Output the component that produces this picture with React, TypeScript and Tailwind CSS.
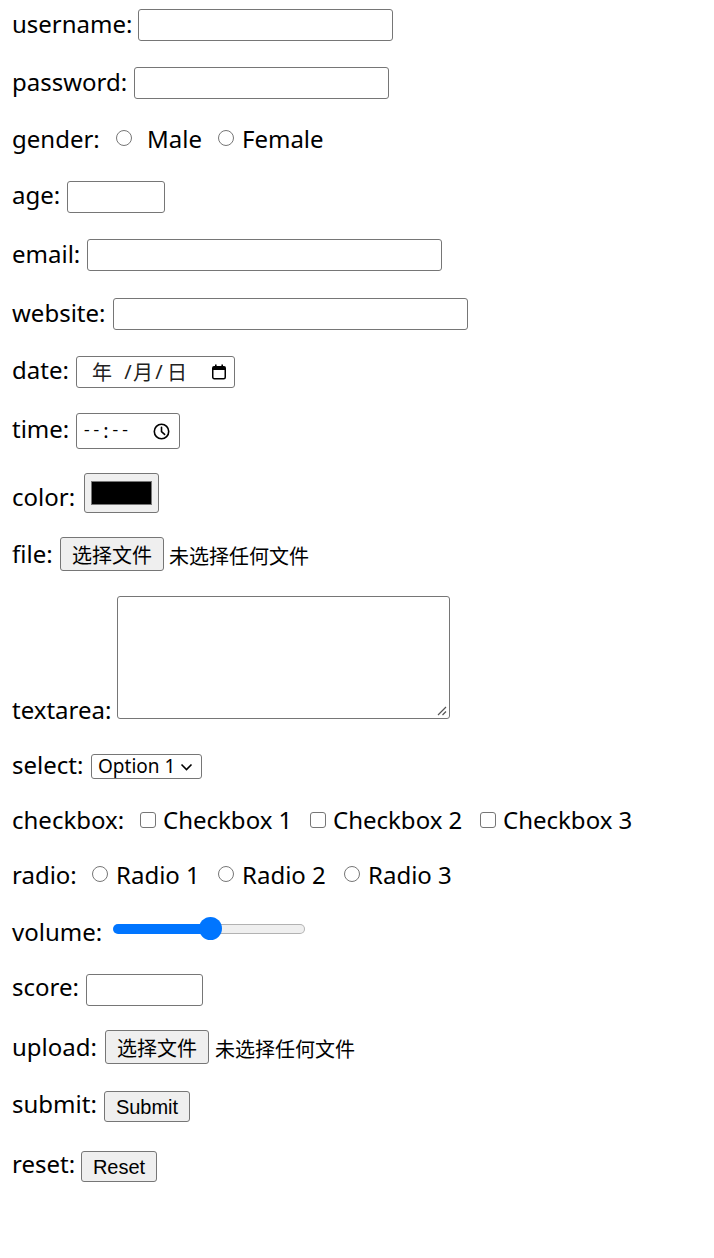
import React from "react";

const inputBox = "shrink-0 h-[32px] border border-[#767676] rounded-[3px] bg-white";
const btn =
  "shrink-0 flex items-center justify-center border border-[#767676] rounded-[3px] bg-[#efefef] text-black";
const lab = "shrink-0 leading-[34px] -mb-[2px] whitespace-nowrap";
const cjk = "font-['Noto_Sans_CJK_SC',sans-serif]";
const arial = "font-['Liberation_Sans',Arial,sans-serif]";

function Radio({ cls }: { cls: string }) {
  return <span className={`shrink-0 w-[16px] h-[16px] rounded-full border border-[#767676] bg-white ${cls}`} />;
}

function Check({ cls }: { cls: string }) {
  return <span className={`shrink-0 w-[16px] h-[16px] rounded-[3px] border border-[#767676] bg-white ${cls}`} />;
}

function CalendarIcon() {
  return (
    <svg width="16" height="16" viewBox="0 0 16 16" className="ml-auto mr-[7px] shrink-0">
      <rect x="1.75" y="2.75" width="12.5" height="12" rx="1.5" fill="none" stroke="#000" strokeWidth="1.5" />
      <rect x="1.75" y="2.75" width="12.5" height="3.25" fill="#000" />
      <rect x="4" y="0.5" width="1.6" height="3" fill="#000" />
      <rect x="10.4" y="0.5" width="1.6" height="3" fill="#000" />
    </svg>
  );
}

function ClockIcon() {
  return (
    <svg width="17" height="17" viewBox="0 0 17 17" className="ml-auto mr-[9px] shrink-0">
      <circle cx="8.5" cy="8.5" r="7.2" fill="none" stroke="#000" strokeWidth="1.6" />
      <path d="M8.5 4.2 V8.7 L11.6 11.4" fill="none" stroke="#000" strokeWidth="1.6" strokeLinecap="round" strokeLinejoin="round" />
    </svg>
  );
}

function FileChooser({ label, labelW, btnMl }: { label: string; labelW: string; btnMl: string }) {
  return (
    <>
      <span className={`${lab} ${labelW}`}>{label}</span>
      <div className={`${btn} w-[104px] h-[34px] pt-[2px] text-[20px] ${cjk}`}>选择文件</div>
      <span className={`${btnMl} mt-[4px] leading-[30px] text-[20px] whitespace-nowrap ${cjk}`}>未选择任何文件</span>
    </>
  );
}

export default function App() {
  return (
    <div className="min-h-screen bg-white text-black font-['Noto_Sans','Noto_Sans_CJK_SC',sans-serif] text-[24px] pl-[12px] pt-[7px]">
      {/* username */}
      <div className="flex items-start">
        <span className={`${lab} w-[126px]`}>username:</span>
        <div className={`${inputBox} w-[255px] mt-[2px]`} />
      </div>

      {/* password */}
      <div className="flex items-start mt-[24px]">
        <span className={`${lab} w-[122px]`}>password:</span>
        <div className={`${inputBox} w-[255px] mt-[2px]`} />
      </div>

      {/* gender */}
      <div className="flex items-start mt-[23px]">
        <span className={`${lab} w-[104px]`}>gender:</span>
        <Radio cls="mt-[8px]" />
        <span className={`${lab} ml-[15px]`}>Male</span>
        <Radio cls="mt-[8px] ml-[16px]" />
        <span className={`${lab} ml-[8px]`}>Female</span>
      </div>

      {/* age */}
      <div className="flex items-start mt-[24px]">
        <span className={`${lab} w-[55px]`}>age:</span>
        <div className={`${inputBox} w-[98px] mt-[3px]`} />
      </div>

      {/* email */}
      <div className="flex items-start mt-[24px]">
        <span className={`${lab} w-[75px]`}>email:</span>
        <div className={`${inputBox} w-[355px] mt-[2px]`} />
      </div>

      {/* website */}
      <div className="flex items-start mt-[25px]">
        <span className={`${lab} w-[101px]`}>website:</span>
        <div className={`${inputBox} w-[355px] mt-[2px]`} />
      </div>

      {/* date */}
      <div className="flex items-start mt-[23px]">
        <span className={`${lab} w-[64px]`}>date:</span>
        <div className={`${inputBox} w-[159px] mt-[3px] flex items-center text-[20px] text-[#222] leading-none`}>
          <span className={`ml-[15px] w-[20px] text-center ${cjk}`}>年</span>
          <span className="ml-[11px] w-[10px] text-center">/</span>
          <span className={`w-[20px] text-center ${cjk}`}>月</span>
          <span className="ml-[1px] w-[10px] text-center">/</span>
          <span className={`ml-[3px] w-[20px] text-center ${cjk}`}>日</span>
          <CalendarIcon />
        </div>
      </div>

      {/* time */}
      <div className="flex items-start mt-[24px]">
        <span className={`${lab} w-[64px]`}>time:</span>
        <div className="shrink-0 w-[104px] h-[36px] mt-[1px] border border-[#767676] rounded-[3px] bg-white flex items-center leading-none">
          <span className="ml-[5px] font-['Liberation_Mono',monospace] text-[16px]">--</span>
          <span className="ml-[2px] text-[20px]">:</span>
          <span className="ml-[2px] font-['Liberation_Mono',monospace] text-[16px]">--</span>
          <ClockIcon />
        </div>
      </div>

      {/* color */}
      <div className="flex items-start mt-[24px]">
        <span className={`${lab} w-[72px] mt-[7px]`}>color:</span>
        <div className="shrink-0 w-[75px] h-[40px] border border-[#767676] rounded-[3px] bg-[#efefef] flex items-center justify-center">
          <div className="w-[61px] h-[24px] bg-black border border-[#777777]" />
        </div>
      </div>

      {/* file */}
      <div className="flex items-start mt-[24px]">
        <FileChooser label="file:" labelW="w-[48px]" btnMl="ml-[5px]" />
      </div>

      {/* textarea */}
      <div className="flex items-start mt-[25px]">
        <span className={`${lab} w-[105px] mt-[97px]`}>textarea:</span>
        <div className="relative shrink-0 w-[333px] h-[123px] border border-[#767676] rounded-[3px] bg-white">
          <svg width="11" height="11" viewBox="0 0 11 11" className="absolute right-[2px] bottom-[2px]">
            <path d="M10 2 L2 10 M10 6.5 L6.5 10" stroke="#555" strokeWidth="1.2" fill="none" />
          </svg>
        </div>
      </div>

      {/* select */}
      <div className="flex items-start mt-[23px]">
        <span className={`${lab} w-[79px]`}>select:</span>
        <div className="shrink-0 w-[111px] h-[25px] mt-[6px] border border-[#767676] rounded-[3px] bg-white flex items-center">
          <span className="ml-[6px] text-[19px] leading-none whitespace-nowrap">Option 1</span>
          <svg width="13" height="8" viewBox="0 0 13 8" className="ml-auto mr-[8px] shrink-0">
            <path d="M1.5 1.5 L6.5 6.5 L11.5 1.5" fill="none" stroke="#000" strokeWidth="1.6" />
          </svg>
        </div>
      </div>

      {/* checkbox */}
      <div className="flex items-start mt-[23px]">
        <span className={`${lab} w-[127px]`}>checkbox:</span>
        <Check cls="mt-[9px] ml-[1px] mr-[7px]" />
        <span className={`${lab} w-[146px]`}>Checkbox 1</span>
        <Check cls="mt-[9px] ml-[1px] mr-[7px]" />
        <span className={`${lab} w-[146px]`}>Checkbox 2</span>
        <Check cls="mt-[9px] ml-[1px] mr-[7px]" />
        <span className={`${lab}`}>Checkbox 3</span>
      </div>

      {/* radio */}
      <div className="flex items-start mt-[23px]">
        <span className={`${lab} w-[80px]`}>radio:</span>
        <Radio cls="mt-[8px] mr-[8px]" />
        <span className={`${lab} w-[102px]`}>Radio 1</span>
        <Radio cls="mt-[8px] mr-[8px]" />
        <span className={`${lab} w-[102px]`}>Radio 2</span>
        <Radio cls="mt-[8px] mr-[8px]" />
        <span className={`${lab}`}>Radio 3</span>
      </div>

      {/* volume */}
      <div className="flex items-start mt-[25px]">
        <span className={`${lab} w-[101px]`}>volume:</span>
        <div className="relative shrink-0 w-[192px] h-[23px] mt-[2px] flex items-center">
          <div className="w-[97px] h-[10px] bg-[#0075ff] rounded-l-full" />
          <div className="flex-1 h-[10px] bg-[#efefef] border border-[#b2b2b2] border-l-0 rounded-r-full" />
          <div className="absolute left-[86px] top-0 w-[23px] h-[23px] rounded-full bg-[#0075ff]" />
        </div>
      </div>

      {/* score */}
      <div className="flex items-start mt-[23px]">
        <span className={`${lab} w-[74px]`}>score:</span>
        <div className={`${inputBox} w-[117px] mt-[4px]`} />
      </div>

      {/* upload */}
      <div className="flex items-start mt-[24px]">
        <FileChooser label="upload:" labelW="w-[93px]" btnMl="ml-[6px]" />
      </div>

      {/* submit */}
      <div className="flex items-start mt-[23px]">
        <span className={`${lab} w-[92px]`}>submit:</span>
        <div className={`${btn} w-[86px] h-[31px] mt-[4px] text-[20px] ${arial}`}>Submit</div>
      </div>

      {/* reset */}
      <div className="flex items-start mt-[25px]">
        <span className={`${lab} w-[69px]`}>reset:</span>
        <div className={`${btn} w-[76px] h-[31px] mt-[4px] text-[20px] ${arial}`}>Reset</div>
      </div>
    </div>
  );
}
